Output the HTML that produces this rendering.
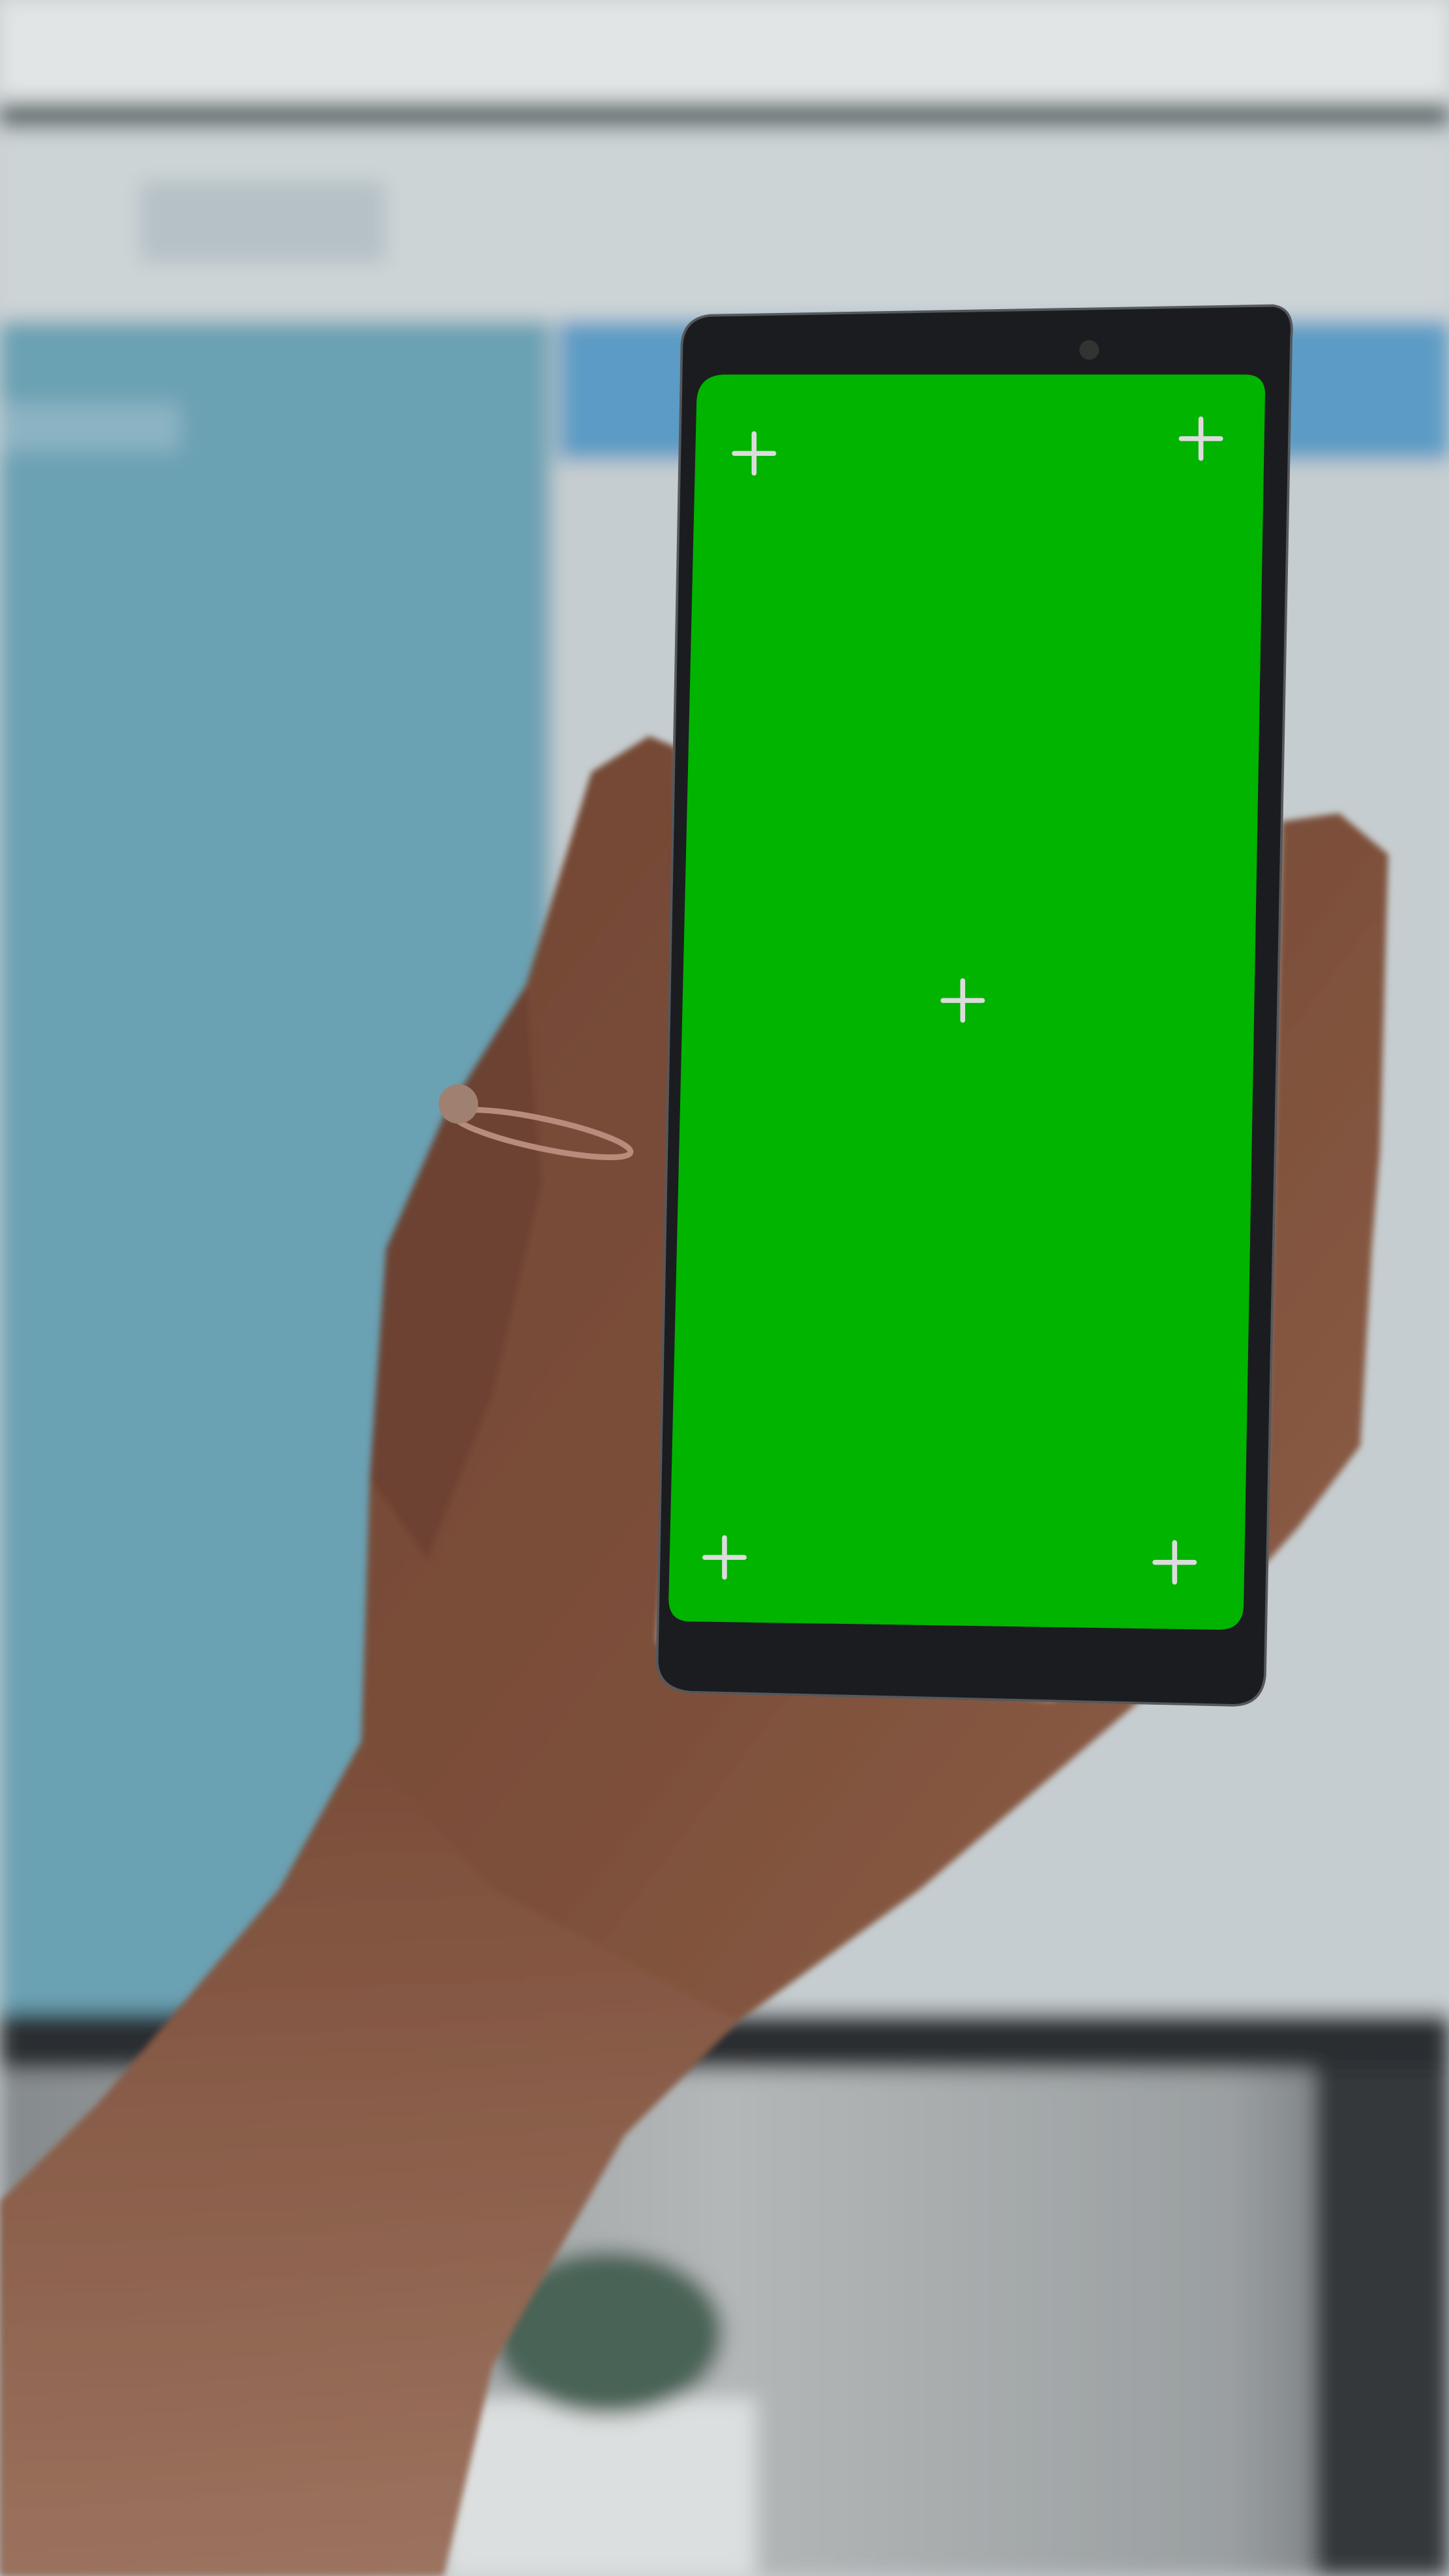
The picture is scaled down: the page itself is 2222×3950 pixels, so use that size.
<!DOCTYPE html>
<html><head><meta charset="utf-8"><style>
html,body{margin:0;padding:0;width:2222px;height:3950px;overflow:hidden;background:#c9cfd2}
svg{display:block}
</style></head><body>
<svg width="2222" height="3950" viewBox="0 0 882 1568" preserveAspectRatio="none" xmlns="http://www.w3.org/2000/svg">
<defs>
<filter id="b" x="-10%" y="-10%" width="120%" height="120%"><feGaussianBlur stdDeviation="6"/></filter>
<filter id="b2"><feGaussianBlur stdDeviation="2"/></filter>
<linearGradient id="skin" x1="0" y1="0" x2="1" y2="1">
<stop offset="0" stop-color="#6e4432"/><stop offset="0.5" stop-color="#7c4f3a"/><stop offset="1" stop-color="#9a6a52"/></linearGradient>
<linearGradient id="arm" x1="0" y1="0" x2="0" y2="1">
<stop offset="0" stop-color="#7a4c38"/><stop offset="1" stop-color="#a27a66"/></linearGradient>
<linearGradient id="room" x1="0" y1="0" x2="1" y2="0">
<stop offset="0" stop-color="#858a8c"/><stop offset="0.5" stop-color="#b3b7b8"/><stop offset="0.85" stop-color="#9a9fa1"/><stop offset="1" stop-color="#5c6063"/></linearGradient>
</defs>
<g filter="url(#b)">
<rect x="0" y="0" width="882" height="75" fill="#e2e5e5"/>
<rect x="0" y="62" width="882" height="18" fill="#5a676b"/>
<rect x="0" y="78" width="882" height="120" fill="#cdd4d6"/>
<rect x="0" y="195" width="335" height="1035" fill="#6aa1b3"/>
<rect x="335" y="195" width="547" height="1035" fill="#c6cdd0"/>
<rect x="340" y="195" width="542" height="85" fill="#5b9bc5"/>
<rect x="0" y="1225" width="882" height="40" fill="#2c2f31"/>
<rect x="0" y="1260" width="882" height="308" fill="url(#room)"/>
<rect x="800" y="1260" width="82" height="308" fill="#34383a"/>
<rect x="270" y="1460" width="190" height="108" fill="#dcdfdf"/>
<ellipse cx="370" cy="1420" rx="70" ry="50" fill="#4a6356"/>
<rect x="85" y="110" width="150" height="50" fill="#b5c1c7"/>
<rect x="0" y="245" width="110" height="30" fill="#8bb3c2"/>
</g>
<g filter="url(#b2)">
<path d="M395 448 L412 455 L418 760 L400 1000 L640 1035 L700 1010 L770 900 L780 500 L815 495 L845 520 L840 700 L835 760 L828 880 L790 930 L700 1030 L560 1150 L450 1230 L380 1300 L300 1440 L270 1568 L0 1568 L0 1340 L60 1280 L170 1150 L220 1060 L225 900 L235 760 L270 680 L320 600 L360 470 Z" fill="url(#skin)"/>
<path d="M0 1340 L60 1280 L170 1150 L220 1060 L300 1150 L450 1230 L380 1300 L300 1440 L270 1568 L0 1568 Z" fill="url(#arm)" opacity="0.8"/>
<path d="M235 760 L270 680 L320 600 L330 720 L300 850 L260 950 L225 900 Z" fill="#633a2a" opacity="0.5"/>
</g>
<ellipse cx="330" cy="690" rx="55" ry="9" fill="none" stroke="#b88c7c" stroke-width="3.5" transform="rotate(12 330 690)"/>
<circle cx="279" cy="672" r="12" fill="#a08070"/>
<path d="M432 192 L775 186 Q788 188 786 205 L770 1020 Q768 1038 750 1038 L420 1030 Q400 1028 400 1010 L415 210 Q416 194 432 192 Z" fill="#1b1c1f" stroke="#55585c" stroke-width="1.5"/>
<path d="M440 228 L758 228 Q771 228 770 242 L757 978 Q756 992 742 992 L420 987 Q407 987 407 973 L424 244 Q425 229 440 228 Z" fill="#00b400"/>
<circle cx="663" cy="213" r="6" fill="#333"/>
<g stroke="#dcdcdc" stroke-width="3" stroke-linecap="round">
<path d="M459 264 V288 M447 276 H471"/>
<path d="M731 255 V279 M719 267 H743"/>
<path d="M586 597 V621 M574 609 H598"/>
<path d="M441 936 V960 M429 948 H453"/>
<path d="M715 939 V963 M703 951 H727"/>
</g>
</svg>
</body></html>
